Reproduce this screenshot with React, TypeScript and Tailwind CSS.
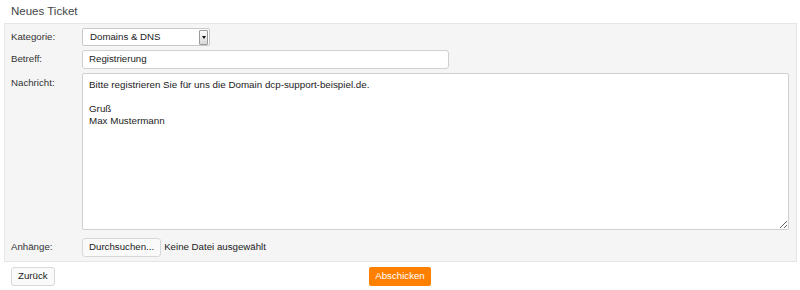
import React from "react";

export default function App() {
  const font = { fontFamily: '"Liberation Sans", Arial, sans-serif' };
  return (
    <div className="w-[800px] h-[290px] bg-white text-[#333]" style={font}>
      <div className="h-[23px] pl-[11px] pt-[4px] text-[11.5px] leading-[14px] text-[#444]">
        Neues Ticket
      </div>
      <div className="ml-[4px] mr-[3px] border border-[#e6e6e6] bg-[#f5f5f5] pl-[6px] pr-[7px] pt-[4px] pb-[4px] flex flex-col gap-[4px] text-[9.7px]">
        <div className="flex items-center">
          <div className="w-[71px]">Kategorie:</div>
          <div className="w-[128px] h-[18px] border border-[#c8c8c8] rounded-[2px] bg-white flex items-center">
            <div className="flex-1 pl-[7px] text-[#222]">Domains &amp; DNS</div>
            <div className="w-[9px] h-[15px] mr-[1px] border border-[#9a9a9a] rounded-[1px] bg-gradient-to-b from-[#ffffff] to-[#d8d8d8] flex items-center justify-center">
              <div className="w-0 h-0 border-l-[2.5px] border-r-[2.5px] border-t-[3px] border-l-transparent border-r-transparent border-t-[#111]" />
            </div>
          </div>
        </div>
        <div className="flex items-center">
          <div className="w-[71px]">Betreff:</div>
          <div className="w-[367px] h-[19px] border border-[#d0d0d0] rounded-[3px] bg-white flex items-center pl-[6px] text-[#222]">
            Registrierung
          </div>
        </div>
        <div className="flex items-start">
          <div className="w-[71px] pt-[3px]">Nachricht:</div>
          <textarea
            readOnly
            className="w-[707px] h-[157px] border border-[#d0d0d0] rounded-[2px] bg-white px-[6px] pt-[5px] leading-[12px] text-[9.8px] text-[#222] outline-none"
            style={font}
            defaultValue={"Bitte registrieren Sie für uns die Domain dcp-support-beispiel.de.\n\nGruß\nMax Mustermann"}
          />
        </div>
        <div className="flex items-center pt-[4px]">
          <div className="w-[71px]">Anhänge:</div>
          <div className="h-[19px] px-[6px] border border-[#d8d8d8] rounded-[3px] bg-[#fafafa] flex items-center text-[#222]">
            Durchsuchen...
          </div>
          <div className="pl-[3px] text-[#222]">Keine Datei ausgewählt</div>
        </div>
      </div>
      <div className="grid grid-cols-[1fr_auto_1fr] items-center mt-[5px] text-[9.7px]">
        <div className="pl-[11px]">
          <div className="inline-flex h-[19px] px-[6px] border border-[#d8d8d8] rounded-[3px] bg-[#fafafa] items-center text-[#222]">
            Zurück
          </div>
        </div>
        <div className="h-[19px] px-[6px] rounded-[2px] bg-[#ff8000] text-white flex items-center">
          Abschicken
        </div>
        <div />
      </div>
    </div>
  );
}
